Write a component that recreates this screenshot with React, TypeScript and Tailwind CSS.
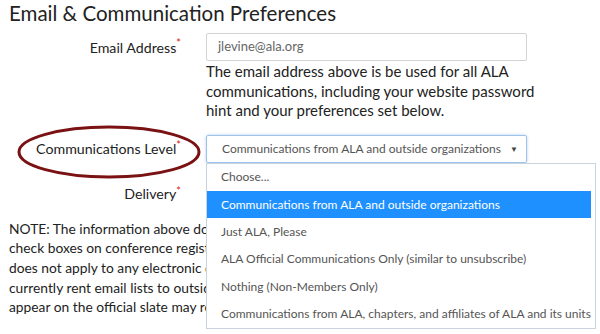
import React from "react";

const options = [
  "Choose...",
  "Communications from ALA and outside organizations",
  "Just ALA, Please",
  "ALA Official Communications Only (similar to unsubscribe)",
  "Nothing (Non-Members Only)",
  "Communications from ALA, chapters, and affiliates of ALA and its units",
];

export default function App() {
  return (
    <div
      className="w-[600px] h-[334px] overflow-hidden bg-white text-[#222] relative"
      style={{ fontFamily: "Lato, 'Open Sans', sans-serif" }}
    >
      <h2 className="pl-[9px] text-[20.5px] leading-[26px] text-[#222]">
        Email &amp; Communication Preferences
      </h2>

      <div className="mt-[7px] grid grid-cols-[181px_1fr] gap-x-[25px]">
        <div className="text-right text-[14.2px] leading-[29px]">
          Email Address<span className="text-[#e02020] text-[11px] align-top leading-[20px]">*</span>
        </div>
        <div>
          <div className="w-[321px] h-[28px] border border-[#d4d4d4] rounded-[2px] flex items-center pl-[11px] text-[13px] text-[#666]">
            jlevine@ala.org
          </div>
          <p className="mt-[1px] text-[15px] leading-[19.5px] w-[330px]">
            The email address above is be used for all ALA communications, including your website password hint and your preferences set below.
          </p>
        </div>

        <div className="relative mt-[14px] text-right text-[14.2px] leading-[28px]">
          Communications Level<span className="text-[#e02020] text-[11px] align-top leading-[20px]">*</span>
          <svg className="absolute left-[17px] top-[-10px]" width="185" height="54" viewBox="0 0 185 54">
            <ellipse cx="92" cy="27" rx="90" ry="25" fill="none" stroke="#7a1214" strokeWidth="3" />
          </svg>
        </div>
        <div className="relative mt-[14px]">
          <div className="w-[321px] h-[28px] border border-[#9cc3ec] rounded-[2px] shadow-[0_0_3px_rgba(100,160,230,0.5)] flex items-center pl-[15px] pr-[8px] text-[12px] text-[#555] whitespace-nowrap">
            <span className="flex-1">Communications from ALA and outside organizations</span>
            <span className="text-[8px] text-[#444]">▼</span>
          </div>
          <div className="absolute left-0 top-[28px] z-10 w-max min-w-[321px] pr-[4px] bg-white border border-[#c9d3e0] text-[12px] text-[#555]">
            {options.map((o, i) => (
              <div
                key={o}
                className={
                  "h-[27.4px] flex items-center pl-[14px] whitespace-nowrap " +
                  (i === 1 ? "bg-[#1e90ff] text-white" : "")
                }
              >
                {o}
              </div>
            ))}
          </div>
        </div>

        <div className="mt-[20px] text-right text-[14.2px] leading-[22px]">
          Delivery<span className="text-[#e02020] text-[11px] align-top leading-[16px]">*</span>
        </div>
        <div />
      </div>

      <p className="pl-[9px] pt-[14px] text-[13.8px] leading-[19.7px] whitespace-nowrap">
        NOTE: The information above does not affect the<br />
        check boxes on conference registration forms. It<br />
        does not apply to any electronic discussion lists. ALA does not<br />
        currently rent email lists to outside organizations. Candidates who<br />
        appear on the official slate may receive election communications.
      </p>
    </div>
  );
}
